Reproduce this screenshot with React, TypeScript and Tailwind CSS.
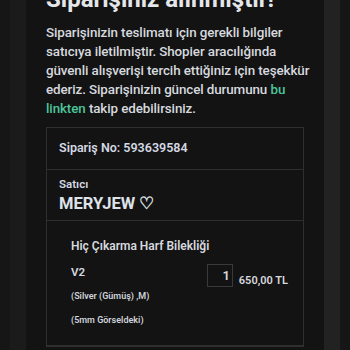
export default function App() {
  return (
    <div className="min-h-screen bg-[#161616] px-[10px] font-['Roboto',sans-serif] text-[#d6d9df]">
      <div className="min-h-[350px] border-l-[16px] border-r-[16px] border-l-[#1b1b1b] border-r-[#222222] bg-[#131313]">
        <div className="px-5 pb-6">
          <h1 className="-mt-[16px] text-[24px] font-bold leading-[30px] text-[#e4e6ea]">
            Siparişiniz alınmıştır!
          </h1>
          <p className="mt-[9px] whitespace-nowrap text-[13.4px] font-medium leading-[19px] tracking-[-0.1px]">
            Siparişinizin teslimatı için gerekli bilgiler
            <br />
            satıcıya iletilmiştir. Shopier aracılığında
            <br />
            güvenli alışverişi tercih ettiğiniz için teşekkür
            <br />
            ederiz. Siparişinizin güncel durumunu <a className="text-[#4cc59a]">bu</a>
            <br />
            <a className="text-[#4cc59a]">linkten</a> takip edebilirsiniz.
          </p>

          <div className="mt-[9px] border border-[#2f2f2f]">
            <div className="flex h-[42px] items-center border-b border-[#2f2f2f] px-[12px]">
              <span className="text-[12.5px] font-semibold text-[#d3d8e2]">Sipariş No: 593639584</span>
            </div>

            <div className="flex h-[51px] flex-col justify-center border-b border-[#2f2f2f] px-[12px] pt-[2px]">
              <span className="text-[11.5px] font-semibold leading-[14px] text-[#d3d8e2]">Satıcı</span>
              <span className="mt-[2px] text-[16.5px] font-bold leading-[22px] text-[#dfe2e8]">MERYJEW ♡</span>
            </div>

            <div className="flex h-[125px] border-b border-[#2f2f2f] pl-[24px] pr-[15px] pt-[16px]">
              <div className="flex min-w-0 flex-1 flex-col">
                <span className="whitespace-nowrap text-[12px] font-semibold leading-[18px]">Hiç Çıkarma Harf Bilekliği</span>
                <span className="mt-[8px] text-[11.5px] font-semibold leading-[18px]">V2</span>
                <span className="mt-[8px] text-[9px] font-semibold leading-[14px] text-[#cfd2d8]">(Silver (Gümüş) ,M)</span>
                <span className="mt-[10px] text-[9px] font-semibold leading-[14px] text-[#cfd2d8]">(5mm Görseldeki)</span>
              </div>
              <div className="mt-[27px] flex shrink-0 items-start gap-[6px]">
                <div className="flex h-[23px] w-[26px] items-center justify-end border border-[#3a3a3a] pr-[2px] text-[13px] font-semibold">
                  1
                </div>
                <span className="mt-[10px] whitespace-nowrap text-[11px] font-semibold leading-[14px]">650,00 TL</span>
              </div>
            </div>
          </div>
        </div>
      </div>
    </div>
  );
}
